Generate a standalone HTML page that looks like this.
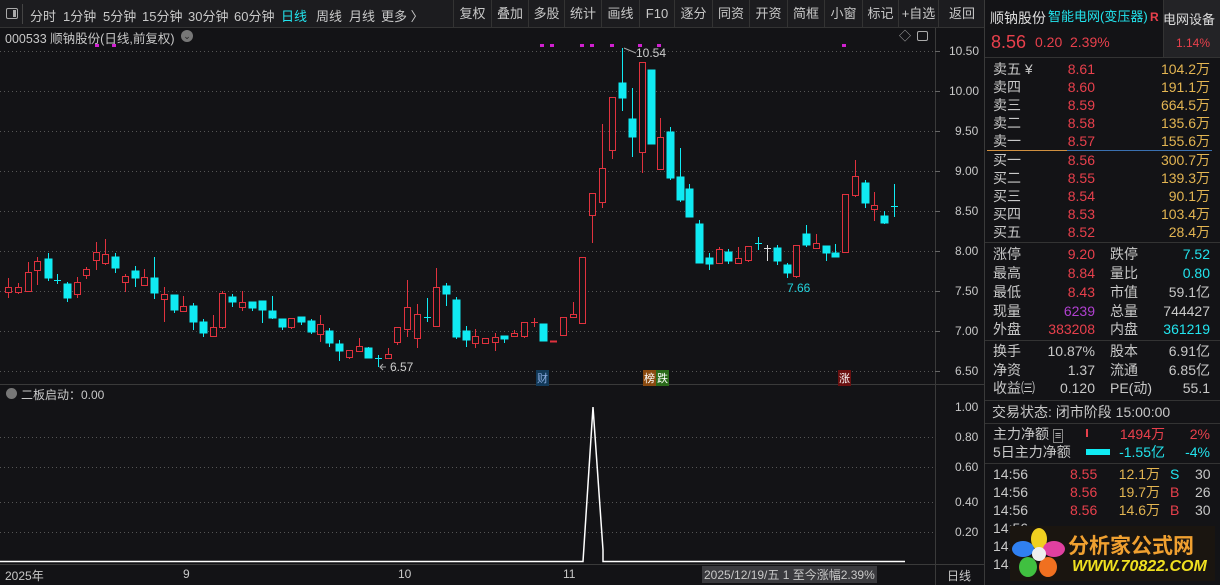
<!DOCTYPE html>
<html><head><meta charset="utf-8"><style>
*{margin:0;padding:0;box-sizing:border-box}
body{width:1220px;height:585px;background:#131316;overflow:hidden;position:relative;font-family:"Liberation Sans","Noto Sans CJK SC",sans-serif;color:#c8c8c8;font-size:13px}
.a{position:absolute;white-space:nowrap}
.tb{position:absolute;top:0;left:0;width:985px;height:28px;background:#1c1c1f;border-bottom:1px solid #333}
.tb span{position:absolute;top:6px;font-size:13px;color:#c8c8c8}
.btn{position:absolute;top:0;height:28px;border-left:1px solid #333;text-align:center;line-height:28px;font-size:13px;color:#c8c8c8}
.r{color:#e8404c}.c{color:#22e4ee}.y{color:#e3b552}.w{color:#c8c8c8}.p{color:#b040d0}
.rp div{position:absolute;white-space:nowrap;font-size:14px;line-height:18px;height:18px}
.hl{position:absolute;left:985px;width:235px;height:1px;background:#333}
</style></head><body>
<div class="tb">
<div style="position:absolute;left:6px;top:8px;width:12px;height:11px;border:1px solid #aaa;border-radius:2px"><div style="position:absolute;right:1px;top:1px;width:3px;height:7px;background:#aaa"></div></div>
<div style="position:absolute;left:22px;top:4px;width:1px;height:20px;background:#444"></div>
<span style="left:30px">分时</span><span style="left:63px">1分钟</span><span style="left:103px">5分钟</span><span style="left:142px">15分钟</span><span style="left:188px">30分钟</span><span style="left:234px">60分钟</span><span style="left:281px;color:#22e4ee">日线</span><span style="left:316px">周线</span><span style="left:349px">月线</span><span style="left:381px">更多 〉</span>
<div class="btn" style="left:453px;width:38px">复权</div><div class="btn" style="left:491px;width:37px">叠加</div><div class="btn" style="left:528px;width:36px">多股</div><div class="btn" style="left:564px;width:37px">统计</div><div class="btn" style="left:601px;width:38px">画线</div><div class="btn" style="left:639px;width:35px">F10</div><div class="btn" style="left:674px;width:38px">逐分</div><div class="btn" style="left:712px;width:37px">同资</div><div class="btn" style="left:749px;width:38px">开资</div><div class="btn" style="left:787px;width:37px">简框</div><div class="btn" style="left:824px;width:38px">小窗</div><div class="btn" style="left:862px;width:36px">标记</div><div class="btn" style="left:898px;width:40px">+自选</div><div class="btn" style="left:938px;width:47px">返回</div>
</div>
<div class="a" style="left:5px;top:28px;font-size:12.5px">000533 顺钠股份(日线,前复权)</div>
<div class="a" style="left:181px;top:30px;width:12px;height:12px;border-radius:6px;background:#777;color:#222;font-size:9px;text-align:center;line-height:12px">⌄</div>
<div class="a" style="left:899px;top:27px;color:#aaa;font-size:12px">◇</div>
<div class="a" style="left:917px;top:31px;width:11px;height:10px;border:1px solid #aaa;border-radius:2px"></div>

<svg class="a" style="left:0;top:0" width="985" height="585">
<g stroke="#555" stroke-dasharray="1,3" stroke-width="1">
<line x1="0" x2="935" y1="51.5" y2="51.5"/><line x1="0" x2="935" y1="91.5" y2="91.5"/><line x1="0" x2="935" y1="131.5" y2="131.5"/><line x1="0" x2="935" y1="171.5" y2="171.5"/><line x1="0" x2="935" y1="211.5" y2="211.5"/><line x1="0" x2="935" y1="251.5" y2="251.5"/><line x1="0" x2="935" y1="291.5" y2="291.5"/><line x1="0" x2="935" y1="331.5" y2="331.5"/><line x1="0" x2="935" y1="371.5" y2="371.5"/>
<line x1="0" x2="935" y1="437.5" y2="437.5"/><line x1="0" x2="935" y1="467.5" y2="467.5"/><line x1="0" x2="935" y1="502.5" y2="502.5"/><line x1="0" x2="935" y1="532.5" y2="532.5"/>
</g>
<g stroke="#3a3a3a"><line x1="935.5" y1="28" x2="935.5" y2="585"/><line x1="984.5" y1="0" x2="984.5" y2="585"/><line x1="0" y1="384.5" x2="985" y2="384.5"/><line x1="0" y1="564.5" x2="985" y2="564.5"/></g>
<g fill="#d020d0"><rect x="95" y="44" width="4" height="3"/><rect x="112" y="44" width="4" height="3"/><rect x="540" y="44" width="4" height="3"/><rect x="550" y="44" width="4" height="3"/><rect x="580" y="44" width="4" height="3"/><rect x="590" y="44" width="4" height="3"/><rect x="610" y="44" width="4" height="3"/><rect x="638" y="44" width="4" height="3"/><rect x="657" y="44" width="4" height="3"/><rect x="842" y="44" width="4" height="3"/></g>
<g stroke="#e0323e" fill="#131316">
<line x1="8.5" y1="278" x2="8.5" y2="298"/><rect x="5.5" y="287.5" width="6" height="5"/>
<line x1="18.5" y1="283" x2="18.5" y2="294"/><rect x="15.5" y="287.5" width="6" height="5"/>
<line x1="28.5" y1="262" x2="28.5" y2="292"/><rect x="25.5" y="272.5" width="6" height="19"/>
<line x1="37.5" y1="257" x2="37.5" y2="285"/><rect x="34.5" y="261.5" width="6" height="9"/>
<line x1="77.5" y1="277" x2="77.5" y2="298"/><rect x="74.5" y="282.5" width="6" height="12"/>
<line x1="86.5" y1="267" x2="86.5" y2="279"/><rect x="83.5" y="269.5" width="6" height="6"/>
<line x1="96.5" y1="242" x2="96.5" y2="270"/><rect x="93.5" y="252.5" width="6" height="8"/>
<line x1="105.5" y1="239" x2="105.5" y2="265"/><rect x="102.5" y="254.5" width="6" height="9"/>
<line x1="125.5" y1="274" x2="125.5" y2="292"/><rect x="122.5" y="276.5" width="6" height="6"/>
<line x1="144.5" y1="269" x2="144.5" y2="286"/><rect x="141.5" y="277.5" width="6" height="8"/>
<line x1="164.5" y1="287" x2="164.5" y2="322"/><rect x="161.5" y="294.5" width="6" height="5"/>
<line x1="183.5" y1="296" x2="183.5" y2="312"/><rect x="180.5" y="306.5" width="6" height="5"/>
<line x1="213.5" y1="315" x2="213.5" y2="336"/><rect x="210.5" y="327.5" width="6" height="9"/>
<line x1="222.5" y1="291" x2="222.5" y2="329"/><rect x="219.5" y="293.5" width="6" height="34"/>
<line x1="242.5" y1="291" x2="242.5" y2="311"/><rect x="239.5" y="302.5" width="6" height="5"/>
<line x1="291.5" y1="318" x2="291.5" y2="329"/><rect x="288.5" y="318.5" width="6" height="9"/>
<line x1="320.5" y1="315" x2="320.5" y2="342"/><rect x="317.5" y="324.5" width="6" height="10"/>
<line x1="349.5" y1="350" x2="349.5" y2="359"/><rect x="346.5" y="350.5" width="6" height="7"/>
<line x1="359.5" y1="338" x2="359.5" y2="351"/><rect x="356.5" y="346.5" width="6" height="5"/>
<line x1="388.5" y1="348" x2="388.5" y2="358"/><rect x="385.5" y="354.5" width="6" height="4"/>
<line x1="397.5" y1="327" x2="397.5" y2="345"/><rect x="394.5" y="327.5" width="6" height="15"/>
<line x1="407.5" y1="280" x2="407.5" y2="337"/><rect x="404.5" y="307.5" width="6" height="22"/>
<line x1="417.5" y1="304" x2="417.5" y2="348"/><rect x="414.5" y="314.5" width="6" height="24"/>
<line x1="436.5" y1="268" x2="436.5" y2="327"/><rect x="433.5" y="287.5" width="6" height="39"/>
<line x1="475.5" y1="329" x2="475.5" y2="348"/><rect x="472.5" y="336.5" width="6" height="7"/>
<line x1="485.5" y1="338" x2="485.5" y2="343"/><rect x="482.5" y="338.5" width="6" height="5"/>
<line x1="495.5" y1="333" x2="495.5" y2="351"/><rect x="492.5" y="337.5" width="6" height="5"/>
<line x1="514.5" y1="330" x2="514.5" y2="337"/><rect x="511.5" y="333.5" width="6" height="3"/>
<line x1="524.5" y1="322" x2="524.5" y2="338"/><rect x="521.5" y="322.5" width="6" height="14"/>
<line x1="534.5" y1="318" x2="534.5" y2="327"/><line x1="531" y1="322.5" x2="538" y2="322.5"/>
<line x1="550" y1="341.5" x2="557" y2="341.5" stroke-width="2"/>
<rect x="560.5" y="317.5" width="6" height="18"/>
<line x1="573.5" y1="302" x2="573.5" y2="318"/><rect x="570.5" y="314.5" width="6" height="3"/>
<rect x="579.5" y="257.5" width="6" height="66"/>
<line x1="592.5" y1="193" x2="592.5" y2="243"/><rect x="589.5" y="193.5" width="6" height="22"/>
<line x1="602.5" y1="124" x2="602.5" y2="208"/><rect x="599.5" y="168.5" width="6" height="34"/>
<line x1="612.5" y1="97" x2="612.5" y2="159"/><rect x="609.5" y="97.5" width="6" height="53"/>
<line x1="642.5" y1="62" x2="642.5" y2="173"/><rect x="639.5" y="62.5" width="6" height="90"/>
<line x1="660.5" y1="118" x2="660.5" y2="169"/><rect x="657.5" y="137.5" width="6" height="32"/>
<line x1="719.5" y1="247" x2="719.5" y2="263"/><rect x="716.5" y="249.5" width="6" height="14"/>
<line x1="738.5" y1="247" x2="738.5" y2="263"/><rect x="735.5" y="258.5" width="6" height="5"/>
<line x1="748.5" y1="246" x2="748.5" y2="262"/><rect x="745.5" y="246.5" width="6" height="14"/>
<line x1="796.5" y1="245" x2="796.5" y2="278"/><rect x="793.5" y="245.5" width="6" height="31"/>
<line x1="816.5" y1="234" x2="816.5" y2="248"/><rect x="813.5" y="243.5" width="6" height="5"/>
<rect x="842.5" y="194.5" width="6" height="58"/>
<line x1="855.5" y1="160" x2="855.5" y2="197"/><rect x="852.5" y="176.5" width="6" height="19"/>
<line x1="874.5" y1="192" x2="874.5" y2="221"/><rect x="871.5" y="205.5" width="6" height="4"/>
</g>
<g stroke="#10eaf2" fill="#10eaf2">
<line x1="48.5" y1="253" x2="48.5" y2="281"/><rect x="45" y="259" width="7" height="19"/>
<line x1="57.5" y1="274" x2="57.5" y2="284"/><line x1="54" y1="280.5" x2="61" y2="280.5"/>
<line x1="67.5" y1="282" x2="67.5" y2="302"/><rect x="64" y="284" width="7" height="14"/>
<line x1="115.5" y1="253" x2="115.5" y2="273"/><rect x="112" y="257" width="7" height="11"/>
<line x1="135.5" y1="266" x2="135.5" y2="287"/><rect x="132" y="271" width="7" height="7"/>
<line x1="154.5" y1="257" x2="154.5" y2="299"/><rect x="151" y="278" width="7" height="15"/>
<line x1="174.5" y1="295" x2="174.5" y2="313"/><rect x="171" y="295" width="7" height="15"/>
<line x1="193.5" y1="303" x2="193.5" y2="330"/><rect x="190" y="306" width="7" height="16"/>
<line x1="203.5" y1="319" x2="203.5" y2="337"/><rect x="200" y="322" width="7" height="11"/>
<line x1="232.5" y1="294" x2="232.5" y2="307"/><rect x="229" y="297" width="7" height="5"/>
<line x1="252.5" y1="302" x2="252.5" y2="311"/><rect x="249" y="302" width="7" height="6"/>
<line x1="262.5" y1="301" x2="262.5" y2="323"/><rect x="259" y="301" width="7" height="9"/>
<line x1="272.5" y1="296" x2="272.5" y2="319"/><rect x="269" y="311" width="7" height="7"/>
<line x1="282.5" y1="319" x2="282.5" y2="330"/><rect x="279" y="319" width="7" height="8"/>
<line x1="301.5" y1="317" x2="301.5" y2="325"/><rect x="298" y="317" width="7" height="5"/>
<line x1="311.5" y1="319" x2="311.5" y2="334"/><rect x="308" y="321" width="7" height="11"/>
<line x1="329.5" y1="328" x2="329.5" y2="347"/><rect x="326" y="331" width="7" height="12"/>
<line x1="339.5" y1="340" x2="339.5" y2="361"/><rect x="336" y="344" width="7" height="7"/>
<line x1="368.5" y1="347" x2="368.5" y2="358"/><rect x="365" y="348" width="7" height="10"/>
<line x1="378.5" y1="355" x2="378.5" y2="367"/><line x1="375" y1="358.5" x2="382" y2="358.5"/>
<line x1="427.5" y1="298" x2="427.5" y2="322"/><line x1="424" y1="317.5" x2="431" y2="317.5"/>
<line x1="446.5" y1="283" x2="446.5" y2="306"/><rect x="443" y="286" width="7" height="8"/>
<line x1="456.5" y1="297" x2="456.5" y2="339"/><rect x="453" y="300" width="7" height="37"/>
<line x1="466.5" y1="326" x2="466.5" y2="347"/><rect x="463" y="331" width="7" height="9"/>
<line x1="504.5" y1="336" x2="504.5" y2="343"/><rect x="501" y="336" width="7" height="3"/>
<rect x="540" y="324" width="7" height="17"/>
<line x1="622.5" y1="48" x2="622.5" y2="111"/><rect x="619" y="83" width="7" height="15"/>
<line x1="632.5" y1="88" x2="632.5" y2="157"/><rect x="629" y="119" width="7" height="18"/>
<rect x="648" y="70" width="7" height="74"/>
<line x1="670.5" y1="127" x2="670.5" y2="180"/><rect x="667" y="132" width="7" height="46"/>
<line x1="680.5" y1="148" x2="680.5" y2="202"/><rect x="677" y="177" width="7" height="23"/>
<line x1="689.5" y1="184" x2="689.5" y2="217"/><rect x="686" y="189" width="7" height="28"/>
<line x1="699.5" y1="220" x2="699.5" y2="263"/><rect x="696" y="224" width="7" height="39"/>
<line x1="709.5" y1="253" x2="709.5" y2="270"/><rect x="706" y="258" width="7" height="6"/>
<line x1="728.5" y1="249" x2="728.5" y2="264"/><rect x="725" y="252" width="7" height="9"/>
<line x1="758.5" y1="237" x2="758.5" y2="250"/><line x1="755" y1="243.5" x2="762" y2="243.5"/>
<line x1="777.5" y1="245" x2="777.5" y2="265"/><rect x="774" y="248" width="7" height="13"/>
<line x1="787.5" y1="263" x2="787.5" y2="278"/><rect x="784" y="265" width="7" height="8"/>
<line x1="806.5" y1="225" x2="806.5" y2="247"/><rect x="803" y="234" width="7" height="11"/>
<line x1="826.5" y1="246" x2="826.5" y2="261"/><rect x="823" y="246" width="7" height="7"/>
<line x1="835.5" y1="244" x2="835.5" y2="257"/><rect x="832" y="253" width="7" height="4"/>
<line x1="865.5" y1="180" x2="865.5" y2="208"/><rect x="862" y="183" width="7" height="20"/>
<line x1="884.5" y1="211" x2="884.5" y2="224"/><rect x="881" y="216" width="7" height="7"/>
<line x1="894.5" y1="184" x2="894.5" y2="217"/><line x1="891" y1="206.5" x2="898" y2="206.5"/>
</g>
<g stroke="#ddd"><line x1="767.5" y1="245" x2="767.5" y2="261"/><line x1="764" y1="248.5" x2="771" y2="248.5"/></g>
<path d="M0 561.5 H583 L593 407 L603 550 V561.5 H905" stroke="#fff" stroke-width="1.5" fill="none"/>
<g stroke="#aaa" fill="none"><path d="M624 48 L636 53"/><path d="M386 367 L380 367 M383 364 L380 367 L383 370"/></g>
<g stroke="#666"><line x1="935" y1="51.5" x2="940" y2="51.5"/><line x1="935" y1="91.5" x2="940" y2="91.5"/><line x1="935" y1="131.5" x2="940" y2="131.5"/><line x1="935" y1="171.5" x2="940" y2="171.5"/><line x1="935" y1="211.5" x2="940" y2="211.5"/><line x1="935" y1="251.5" x2="940" y2="251.5"/><line x1="935" y1="291.5" x2="940" y2="291.5"/><line x1="935" y1="331.5" x2="940" y2="331.5"/><line x1="935" y1="371.5" x2="940" y2="371.5"/></g>
</svg>
<div class="a" style="left:636px;top:46px;font-size:12px;color:#ccc">10.54</div>
<div class="a" style="left:390px;top:360px;font-size:12px;color:#ccc">6.57</div>
<div class="a" style="left:787px;top:281px;font-size:12px;color:#22d4de">7.66</div>
<div class="a" style="left:536px;top:370px;font-size:11px;color:#8ad;background:#123a5a;padding:0 1px">财</div>
<div class="a" style="left:643px;top:370px;font-size:11px;color:#fff;background:#8a4a10;padding:0 1px">榜</div>
<div class="a" style="left:656px;top:370px;font-size:11px;color:#fff;background:#2a6a1a;padding:0 1px">跌</div>
<div class="a" style="left:838px;top:370px;font-size:11px;color:#fff;background:#6a1010;padding:0 1px">涨</div>
<div class="a" style="left:949px;top:44px;font-size:12px">10.50</div><div class="a" style="left:949px;top:84px;font-size:12px">10.00</div><div class="a" style="left:955px;top:124px;font-size:12px">9.50</div><div class="a" style="left:955px;top:164px;font-size:12px">9.00</div><div class="a" style="left:955px;top:204px;font-size:12px">8.50</div><div class="a" style="left:955px;top:244px;font-size:12px">8.00</div><div class="a" style="left:955px;top:284px;font-size:12px">7.50</div><div class="a" style="left:955px;top:324px;font-size:12px">7.00</div><div class="a" style="left:955px;top:364px;font-size:12px">6.50</div>
<div class="a" style="left:955px;top:400px;font-size:12px">1.00</div><div class="a" style="left:955px;top:430px;font-size:12px">0.80</div><div class="a" style="left:955px;top:460px;font-size:12px">0.60</div><div class="a" style="left:955px;top:495px;font-size:12px">0.40</div><div class="a" style="left:955px;top:525px;font-size:12px">0.20</div>
<div class="a" style="left:6px;top:388px;width:11px;height:11px;border-radius:6px;background:#777"></div>
<div class="a" style="left:21px;top:386px;font-size:12px">二板启动：0.00</div>
<div class="a" style="left:5px;top:567px;font-size:12px">2025年</div><div class="a" style="left:183px;top:567px;font-size:12px">9</div><div class="a" style="left:398px;top:567px;font-size:12px">10</div><div class="a" style="left:563px;top:567px;font-size:12px">11</div>
<div class="a" style="left:702px;top:566px;font-size:12px;background:#3a3a3e;padding:0 2px">2025/12/19/五 1 至今涨幅2.39%</div>
<div class="a" style="left:947px;top:567px;font-size:12px">日线</div>

<div class="rp">
<div style="left:990px;top:9px;font-size:14px;color:#ddd">顺钠股份</div>
<div style="left:1048px;top:8px;font-size:13px" class="c">智能电网(变压器)</div>
<div style="left:1150px;top:8px;font-size:12px;font-weight:bold" class="r">R</div>
<div style="left:1163px;top:0;width:57px;height:57px;background:#232326;border-left:1px solid #333"></div>
<div style="left:1163px;top:11px;font-size:13px;color:#ddd">电网设备</div>
<div style="left:1176px;top:34px;font-size:12px" class="r">1.14%</div>
<div style="left:991px;top:32px;font-size:18px;line-height:20px;height:20px" class="r">8.56</div>
<div style="left:1035px;top:33px;font-size:14px" class="r">0.20</div>
<div style="left:1070px;top:33px;font-size:14px" class="r">2.39%</div>
</div>
<div class="hl" style="top:57px"></div>
<div class="rp">
<div style="left:993px;top:60px">卖五 ¥</div><div style="left:1060px;top:60px;width:35px;text-align:right" class="r">8.61</div><div style="left:1140px;top:60px;width:70px;text-align:right" class="y">104.2万</div>
<div style="left:993px;top:78px">卖四</div><div style="left:1060px;top:78px;width:35px;text-align:right" class="r">8.60</div><div style="left:1140px;top:78px;width:70px;text-align:right" class="y">191.1万</div>
<div style="left:993px;top:96px">卖三</div><div style="left:1060px;top:96px;width:35px;text-align:right" class="r">8.59</div><div style="left:1140px;top:96px;width:70px;text-align:right" class="y">664.5万</div>
<div style="left:993px;top:114px">卖二</div><div style="left:1060px;top:114px;width:35px;text-align:right" class="r">8.58</div><div style="left:1140px;top:114px;width:70px;text-align:right" class="y">135.6万</div>
<div style="left:993px;top:132px">卖一</div><div style="left:1060px;top:132px;width:35px;text-align:right" class="r">8.57</div><div style="left:1140px;top:132px;width:70px;text-align:right" class="y">155.6万</div>
<div style="left:987px;top:150px;width:80px;height:1px;background:#d09040"></div><div style="left:1067px;top:150px;width:145px;height:1px;background:#3a70b0"></div>
<div style="left:993px;top:151px">买一</div><div style="left:1060px;top:151px;width:35px;text-align:right" class="r">8.56</div><div style="left:1140px;top:151px;width:70px;text-align:right" class="y">300.7万</div>
<div style="left:993px;top:169px">买二</div><div style="left:1060px;top:169px;width:35px;text-align:right" class="r">8.55</div><div style="left:1140px;top:169px;width:70px;text-align:right" class="y">139.3万</div>
<div style="left:993px;top:187px">买三</div><div style="left:1060px;top:187px;width:35px;text-align:right" class="r">8.54</div><div style="left:1140px;top:187px;width:70px;text-align:right" class="y">90.1万</div>
<div style="left:993px;top:205px">买四</div><div style="left:1060px;top:205px;width:35px;text-align:right" class="r">8.53</div><div style="left:1140px;top:205px;width:70px;text-align:right" class="y">103.4万</div>
<div style="left:993px;top:223px">买五</div><div style="left:1060px;top:223px;width:35px;text-align:right" class="r">8.52</div><div style="left:1140px;top:223px;width:70px;text-align:right" class="y">28.4万</div>
</div>
<div class="hl" style="top:242px"></div>
<div class="rp">
<div style="left:993px;top:245px">涨停</div><div style="left:1040px;top:245px;width:55px;text-align:right" class="r">9.20</div><div style="left:1110px;top:245px">跌停</div><div style="left:1150px;top:245px;width:60px;text-align:right" class="c">7.52</div>
<div style="left:993px;top:264px">最高</div><div style="left:1040px;top:264px;width:55px;text-align:right" class="r">8.84</div><div style="left:1110px;top:264px">量比</div><div style="left:1150px;top:264px;width:60px;text-align:right" class="c">0.80</div>
<div style="left:993px;top:283px">最低</div><div style="left:1040px;top:283px;width:55px;text-align:right" class="r">8.43</div><div style="left:1110px;top:283px">市值</div><div style="left:1150px;top:283px;width:60px;text-align:right">59.1亿</div>
<div style="left:993px;top:302px">现量</div><div style="left:1040px;top:302px;width:55px;text-align:right" class="p">6239</div><div style="left:1110px;top:302px">总量</div><div style="left:1150px;top:302px;width:60px;text-align:right">744427</div>
<div style="left:993px;top:320px">外盘</div><div style="left:1030px;top:320px;width:65px;text-align:right" class="r">383208</div><div style="left:1110px;top:320px">内盘</div><div style="left:1150px;top:320px;width:60px;text-align:right" class="c">361219</div>
</div>
<div class="hl" style="top:340px"></div>
<div class="rp">
<div style="left:993px;top:342px">换手</div><div style="left:1030px;top:342px;width:65px;text-align:right">10.87%</div><div style="left:1110px;top:342px">股本</div><div style="left:1150px;top:342px;width:60px;text-align:right">6.91亿</div>
<div style="left:993px;top:361px">净资</div><div style="left:1030px;top:361px;width:65px;text-align:right">1.37</div><div style="left:1110px;top:361px">流通</div><div style="left:1150px;top:361px;width:60px;text-align:right">6.85亿</div>
<div style="left:993px;top:379px">收益㈢</div><div style="left:1030px;top:379px;width:65px;text-align:right">0.120</div><div style="left:1110px;top:379px">PE(动)</div><div style="left:1150px;top:379px;width:60px;text-align:right">55.1</div>
</div>
<div class="hl" style="top:400px"></div>
<div class="rp"><div style="left:992px;top:403px">交易状态: 闭市阶段 15:00:00</div></div>
<div class="hl" style="top:423px"></div>
<div class="rp">
<div style="left:993px;top:425px">主力净额 <span style="font-size:11px;border:1px solid #888;padding:0 1px">≡</span></div>
<div style="left:1086px;top:429px;width:2px;height:8px;background:#e8404c"></div>
<div style="left:1110px;top:425px;width:55px;text-align:right" class="r">1494万</div><div style="left:1170px;top:425px;width:40px;text-align:right" class="r">2%</div>
<div style="left:993px;top:443px">5日主力净额</div>
<div style="left:1086px;top:449px;width:24px;height:6px;background:#10eaf2"></div>
<div style="left:1110px;top:443px;width:55px;text-align:right" class="c">-1.55亿</div><div style="left:1170px;top:443px;width:40px;text-align:right" class="c">-4%</div>
</div>
<div class="hl" style="top:463px"></div>
<div class="rp">
<div style="left:993px;top:465px">14:56</div><div style="left:1070px;top:465px" class="r">8.55</div><div style="left:1115px;top:465px;width:45px;text-align:right" class="y">12.1万</div><div style="left:1170px;top:465px" class="c">S</div><div style="left:1195px;top:465px">30</div>
<div style="left:993px;top:483px">14:56</div><div style="left:1070px;top:483px" class="r">8.56</div><div style="left:1115px;top:483px;width:45px;text-align:right" class="y">19.7万</div><div style="left:1170px;top:483px" class="r">B</div><div style="left:1195px;top:483px">26</div>
<div style="left:993px;top:501px">14:56</div><div style="left:1070px;top:501px" class="r">8.56</div><div style="left:1115px;top:501px;width:45px;text-align:right" class="y">14.6万</div><div style="left:1170px;top:501px" class="r">B</div><div style="left:1195px;top:501px">30</div>
<div style="left:993px;top:519px">14:56</div><div style="left:993px;top:537px">14:56</div><div style="left:993px;top:555px">14:56</div>
</div>
<div class="a" style="left:1010px;top:526px;width:205px;height:55px;background:#1a1510"></div>
<svg class="a" style="left:1012px;top:527px" width="55" height="52">
<ellipse cx="27" cy="12" rx="8" ry="11" fill="#f0d020"/><ellipse cx="42" cy="22" rx="11" ry="8" fill="#e040a0"/><ellipse cx="36" cy="40" rx="9" ry="10" fill="#f07020"/><ellipse cx="16" cy="40" rx="9" ry="10" fill="#40c040"/><ellipse cx="11" cy="22" rx="11" ry="8" fill="#3080f0"/><circle cx="27" cy="27" r="7" fill="#eee"/>
</svg>
<div class="a" style="left:1068px;top:530px;font-size:21px;font-weight:bold;color:#f0a030;font-family:'Noto Sans CJK SC',sans-serif">分析家公式网</div>
<div class="a" style="left:1072px;top:558px;font-size:16px;font-weight:bold;font-style:italic;color:#f0e020">WWW.70822.COM</div>
</body></html>
